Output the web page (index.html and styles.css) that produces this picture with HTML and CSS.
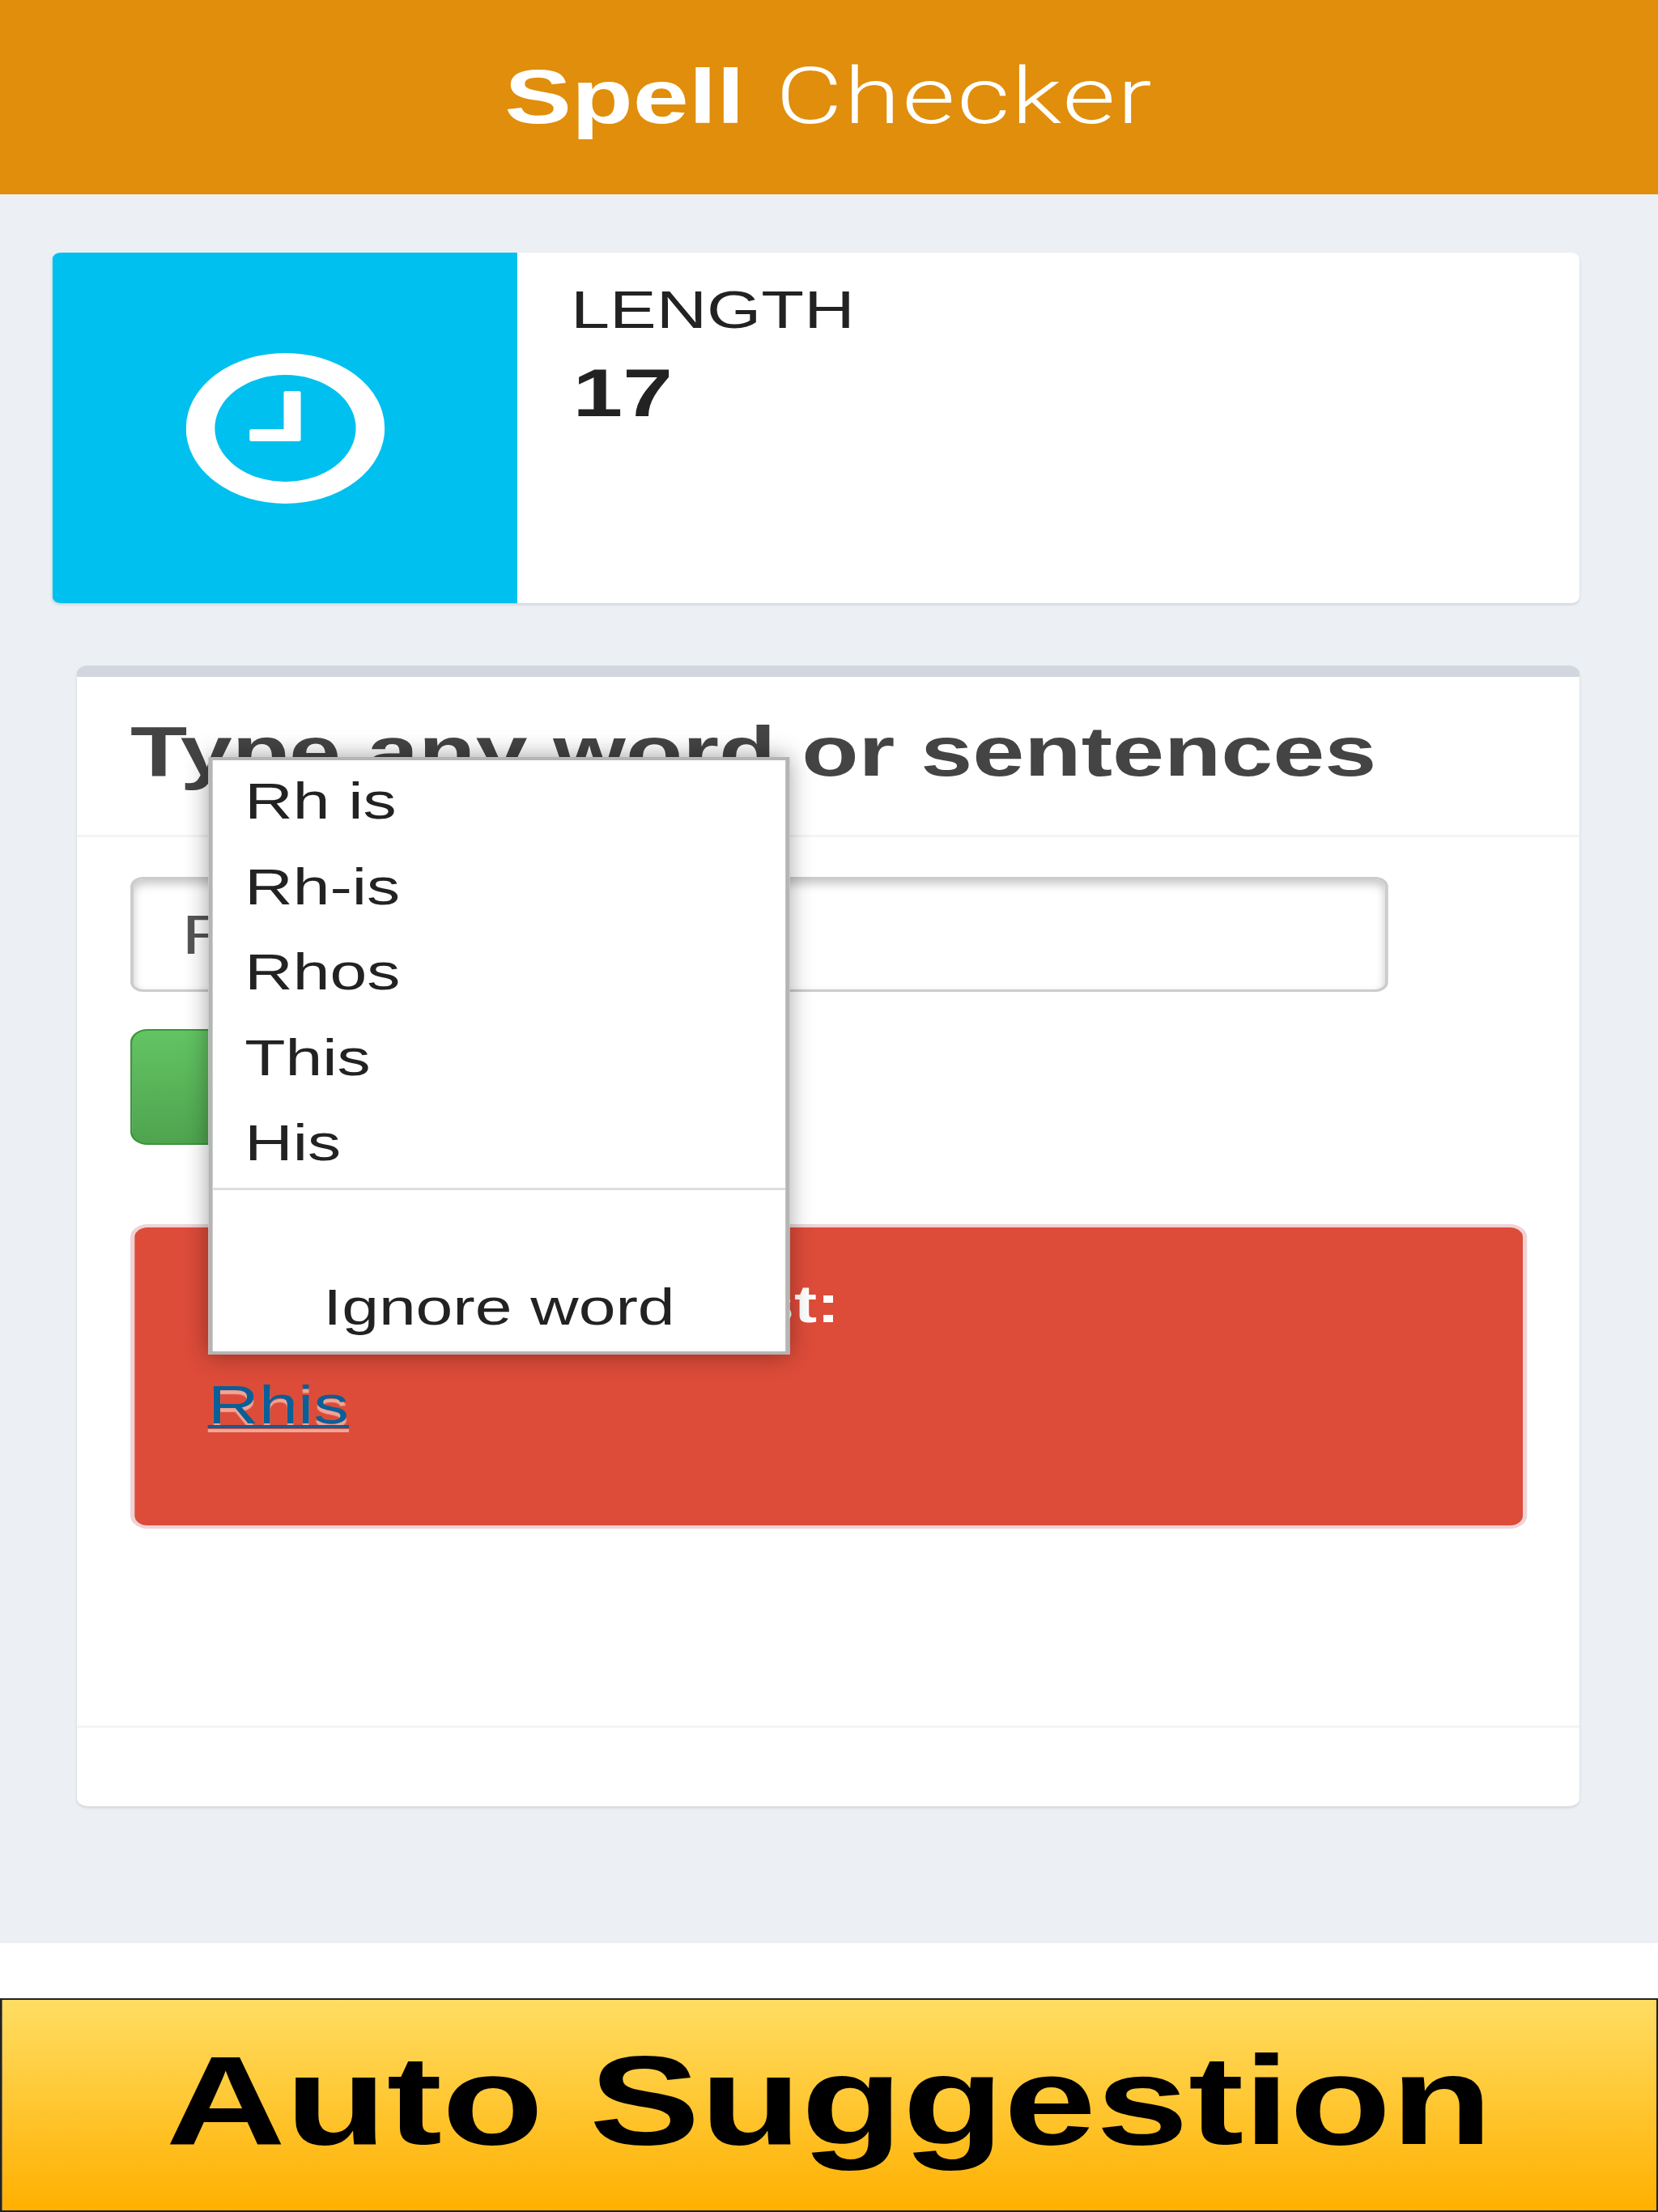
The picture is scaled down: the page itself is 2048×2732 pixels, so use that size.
FILE: index.html
```html
<!DOCTYPE html>
<html lang="en">
<head>
<meta charset="utf-8">
<title>Spell Checker</title>
<link rel="stylesheet" href="styles.css">
</head>
<body>
<div class="stage">
  <header class="topbar"><span class="logo"><b>Spell</b> <span class="logo-light">Checker</span></span></header>
  <main class="content">
    <section class="info-box">
      <div class="info-icon">
        <svg class="clock" viewBox="-93 -93 186 186" aria-hidden="true">
          <circle cx="0" cy="0" r="79.5" fill="none" stroke="#fff" stroke-width="27"/>
          <path d="M-1.5 -44a2 2 0 0 1 2-2h12a2 2 0 0 1 2 2v58a2 2 0 0 1-2 2h-44a2 2 0 0 1-2-2v-11a2 2 0 0 1 2-2h30z" fill="#fff"/>
        </svg>
      </div>
      <div class="info-text">
        <div class="info-label">LENGTH</div>
        <div class="info-number">17</div>
      </div>
    </section>
    <section class="panel">
      <div class="panel-head"><h2>Type any word or sentences</h2></div>
      <div class="panel-body">
        <div class="field">Rhis</div>
        <div class="btn">Check</div>
        <div class="alert">
          <p class="alert-title">Spelling errors list:</p>
          <a class="alert-link" href="#">Rhis</a>
        </div>
      </div>
      <div class="panel-foot"></div>
    </section>
  </main>
  <div class="gap"></div>
  <footer class="banner">Auto Suggestion</footer>
  <div class="menu">
    <ul class="menu-list">
      <li>Rh is</li>
      <li>Rh-is</li>
      <li>Rhos</li>
      <li>This</li>
      <li>His</li>
    </ul>
    <div class="menu-ignore">Ignore word</div>
  </div>
</div>
</body>
</html>
```
FILE: styles.css
```css
* { box-sizing: border-box; }
html, body { margin: 0; padding: 0; background: #fff; overflow: hidden; }
body { width: 2048px; height: 2732px; font-family: "Liberation Sans", Arial, sans-serif; color: #333; }

/* the whole capture is stretched 1.32x horizontally */
.stage { position: relative; width: 1551.5px; height: 2732px; transform: scaleX(1.32); transform-origin: 0 0; }

.topbar { height: 240px; background: #e08e0b; display: flex; align-items: center; justify-content: center; color: #fff; }
.logo { font-size: 94px; line-height: 1; position: relative; top: -1px; }
.logo-light { font-family: Roboto, "Liberation Sans", sans-serif; font-weight: 300; font-size: 96px; letter-spacing: 1.6px; margin-left: 3px; }

.content { height: 2160px; background: #ecf0f5; padding: 72px 73.5px 0 49px; }

.info-box { display: flex; height: 433px; background: #fff; border-radius: 8px; box-shadow: 0 2px 3px rgba(0,0,0,.12); overflow: hidden; }
.info-icon { width: 435px; background: #00c0ef; display: flex; align-items: center; justify-content: center; }
.clock { width: 186px; height: 186px; display: block; }
.info-text { padding: 34px 0 0 50px; color: #222; }
.info-label { font-size: 65.5px; line-height: 74px; }
.info-number { font-size: 84px; line-height: 92px; font-weight: 700; margin: 19px 0 0 2px; }

.panel { margin: 77px 0 0 23px; background: #fff; border-top: 14px solid #d2d6de; border-radius: 10px; box-shadow: 0 2px 3px rgba(0,0,0,.12); }
.panel-head { height: 198px; border-bottom: 3px solid #f4f4f4; padding: 42px 0 0 50px; }
.panel-head h2 { margin: 0; font-size: 87.2px; line-height: 100px; font-weight: 700; color: #444; }
.panel-body { height: 1097px; padding: 49px 0 0 50px; }
.field { width: 1177px; height: 142px; border: 3px solid #ccc; border-radius: 12px; box-shadow: inset 0 6px 10px rgba(0,0,0,.22); padding: 0 0 0 45px; font-size: 68px; line-height: 136px; color: #555; }
.btn { width: 400px; height: 143px; margin-top: 46px; border: 2px solid #3a963a; border-radius: 16px; background: linear-gradient(#62c462, #4fa44f); color: #fff; font-size: 64px; font-weight: 700; line-height: 137px; text-align: center; }
.alert { width: 1307px; height: 376px; margin: 98px 0 0 0; padding: 58px 0 0 68.5px; background: #dd4b39; border: 4px solid #eed3d7; border-radius: 16px; color: #fff; }
.alert-title { margin: 0 0 0 8px; font-size: 64px; line-height: 74px; font-weight: 700; }
.alert-link { display: inline-block; margin-top: 50px; font-size: 66px; line-height: 74px; color: #0b5f97; text-decoration: underline; text-decoration-thickness: 4px; text-shadow: 0 5px 1px rgba(255,225,215,.6); }
.panel-foot { height: 100px; border-top: 3px solid #f4f4f4; }

.gap { height: 68px; background: #fff; }
.banner { height: 264px; border: 2px solid #222; background: linear-gradient(#ffdd63, #ffb000); color: #000; font-size: 155.2px; font-weight: 700; line-height: 1; display: flex; align-items: center; justify-content: center; padding-bottom: 11px; }

.menu { position: absolute; left: 195px; top: 935px; width: 544px; height: 738px; background: #fff; border: 4px solid #b5b5b5; box-shadow: 0 0 24px rgba(0,0,0,.38); color: #222; font-size: 62.3px; }
.menu-list { list-style: none; margin: 0; padding: 1px 0 0 30px; height: 531px; border-bottom: 3px solid #ddd; }
.menu-list li { height: 105.6px; line-height: 100px; }
.menu-ignore { padding-top: 110px; line-height: 70px; text-align: center; }
```
